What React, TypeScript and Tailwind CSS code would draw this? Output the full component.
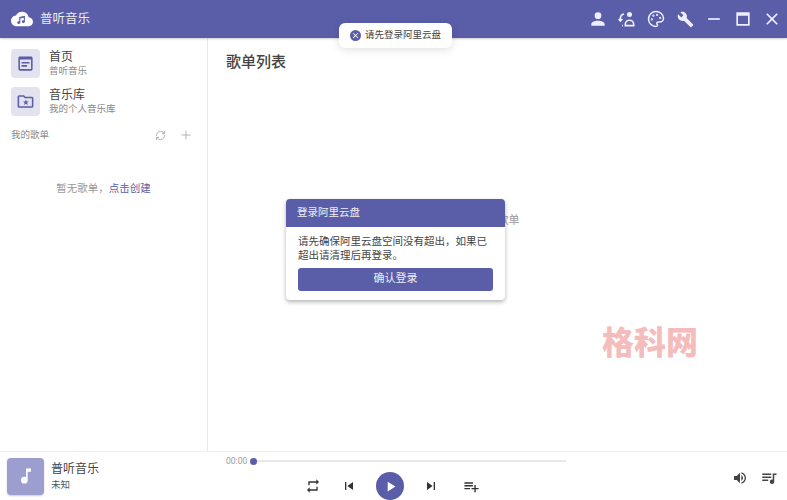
import React from "react";
import { Palette, RefreshCw, Plus } from "lucide-react";

const P = ({ d, size = 24, className = "" }: { d: string; size?: number; className?: string }) => (
  <svg width={size} height={size} viewBox="0 0 24 24" fill="currentColor" className={className}><path d={d} /></svg>
);

const mdi = {
  account: "M12,4A4,4 0 0,1 16,8A4,4 0 0,1 12,12A4,4 0 0,1 8,8A4,4 0 0,1 12,4M12,14C16.42,14 20,15.79 20,18V20H4V18C4,15.79 7.58,14 12,14Z",
  wrench: "M22.7,19L13.6,9.9C14.5,7.6 14,4.9 12.1,3C10.1,1 7.1,0.6 4.7,1.7L9,6L6,9L1.6,4.7C0.4,7.1 0.9,10.1 2.9,12.1C4.8,14 7.5,14.5 9.8,13.6L18.9,22.7C19.3,23.1 19.9,23.1 20.3,22.7L22.6,20.4C23.1,20 23.1,19.3 22.7,19Z",
  repeat: "M17,17H7V14L3,18L7,22V19H19V13H17M7,7H17V10L21,6L17,2V5H5V11H7V7Z",
  prev: "M6,18V6H8V18H6M9.5,12L18,6V18L9.5,12Z",
  next: "M16,18H18V6H16M6,18L14.5,12L6,6V18Z",
  play: "M8,5.14V19.14L19,12.14L8,5.14Z",
  add: "M2,16H10V14H2M18,14V10H16V14H12V16H16V20H18V16H22V14M14,6H2V8H14M14,10H2V12H14V10Z",
  volume: "M14,3.23V5.29C16.89,6.15 19,8.83 19,12C19,15.17 16.89,17.84 14,18.7V20.77C18,19.86 21,16.28 21,12C21,7.72 18,4.14 14,3.23M16.5,12C16.5,10.23 15.5,8.71 14,7.97V16C15.5,15.29 16.5,13.76 16.5,12M3,9V15H7L12,20V4L7,9H3Z",
  music: "M12,3V13.55C11.41,13.21 10.73,13 10,13A4,4 0 0,0 6,17A4,4 0 0,0 10,21A4,4 0 0,0 14,17V7H18V3H12Z",
  queue: "M15,6H3V8H15V6M15,10H3V12H15V10M3,16H11V14H3V16M17,6V14.18C16.69,14.07 16.35,14 16,14A3,3 0 0,0 13,17A3,3 0 0,0 16,20A3,3 0 0,0 19,17V8H22V6H17Z",
  minus: "M19,13H5V11H19V13Z",
  close: "M19,6.41L17.59,5L12,10.59L6.41,5L5,6.41L10.59,12L5,17.59L6.41,19L12,13.41L17.59,19L19,17.59L13.41,12L19,6.41Z",
  max: "M4,4H20V20H4V4M6,8V18H18V8H6Z",
  news: "M19,3H5C3.9,3 3,3.9 3,5V19C3,20.1 3.9,21 5,21H19C20.1,21 21,20.1 21,19V5C21,3.9 20.1,3 19,3M19,19H5V7H19V19M7,10H17V12H7V10M7,14H14V16H7V14Z",
  folderStar: "M20,6H12L10,4H4C2.9,4 2,4.9 2,6V18C2,19.1 2.9,20 4,20H20C21.1,20 22,19.1 22,18V8C22,6.9 21.1,6 20,6M20,18H4V6H9.17L11.17,8H20V18M12.5,9.5L13.6,12H16.2L14.1,13.7L14.9,16.4L12.5,14.8L10.1,16.4L10.9,13.7L8.8,12H11.4L12.5,9.5Z",
};

const NavItem = ({ icon, title, sub }: { icon: string; title: string; sub: string }) => (
  <div className="flex items-center h-[38px] gap-[9px]">
    <div className="w-[29px] h-[29px] rounded-[4px] bg-[#e2e3ef] flex items-center justify-center text-[#5a5ea9]">
      <P d={icon} size={19} />
    </div>
    <div className="flex flex-col">
      <span className="text-[12px] leading-[15px] text-[#444]">{title}</span>
      <span className="text-[9.5px] leading-[12px] text-[#888]">{sub}</span>
    </div>
  </div>
);

export default function App() {
  return (
    <div className="relative w-[787px] h-[500px] overflow-hidden bg-white flex flex-col" style={{ fontFamily: 'Roboto, "Noto Sans CJK SC", sans-serif' }}>
      <header className="h-[38px] shrink-0 bg-[#5a5ea9] flex items-center text-white shadow-[0_1px_2px_rgba(0,0,0,0.2)] z-10">
        <svg width="22" height="16" viewBox="0 0 24 17" className="ml-[11px]">
          <path fill="#fff" d="M19.3 6.6C18.6 2.9 15.6 0.5 12 0.5c-2.9 0-5.4 1.6-6.6 4.1C2.3 4.9 0 7.4 0 10.5c0 3.3 2.7 6 6 6h13c2.8 0 5-2.2 5-5 0-2.6-2.1-4.7-4.7-4.9z" />
          <path fill="#5a5ea9" d="M9 6.2l6.2-1.3v6.4a1.7 1.5 0 1 1-1.2-1.4V7.2l-3.8.8v4.4a1.7 1.5 0 1 1-1.2-1.4z" />
        </svg>
        <span className="ml-[7px] text-[12.5px] text-[#eceded]">普听音乐</span>
        <div className="ml-auto flex items-center gap-[9px] mr-[5px] text-[#eef]">
          <P d={mdi.account} size={20} />
          <svg width="20" height="20" viewBox="0 0 24 24" fill="none" stroke="currentColor" strokeWidth="2">
            <circle cx="15" cy="6.5" r="3" fill="currentColor" stroke="none" />
            <path d="M10 20v-1.5C10 15 13 13.5 15 13.5s5 1.500 5 5V20z" />
            <path d="M8.500 6C5 6.500 4 9 4 12v2M2 12l2 2.500L6.500 12M6 20h1" />
          </svg>
          <Palette size={18} strokeWidth={2} className="mx-px" />
          <P d={mdi.wrench} size={17} className="mx-[1.500px]" />
          <P d={mdi.minus} size={20} />
          <P d={mdi.max} size={20} />
          <P d={mdi.close} size={20} />
        </div>
      </header>

      <div className="flex flex-1 min-h-0">
        <aside className="w-[208px] shrink-0 border-r border-[#e8e8e8] px-[11px] pt-[6px] flex flex-col">
          <NavItem icon={mdi.news} title="首页" sub="普听音乐" />
          <NavItem icon={mdi.folderStar} title="音乐库" sub="我的个人音乐库" />
          <div className="flex items-center h-[20px] mt-[5px] text-[#999]">
            <span className="text-[9.5px] text-[#888]">我的歌单</span>
            <RefreshCw size={11} strokeWidth={2} className="ml-auto text-[#aaa]" />
            <Plus size={14} strokeWidth={1.5} className="ml-[13px] mr-[3px] text-[#aaa]" />
          </div>
          <div className="mt-[36px] text-center text-[10.5px] text-[#999]">
            暂无歌单，<span className="text-[#5a5ea9]">点击创建</span>
          </div>
        </aside>
        <main className="flex-1 min-w-0 pt-[13px] px-[18px]">
          <h1 className="text-[15px] leading-[22px] font-medium text-[#444]">歌单列表</h1>
          <div className="mt-[140px] text-center text-[11px] text-[#999]">暂无歌单</div>
        </main>
      </div>

      <footer className="h-[49px] shrink-0 border-t border-[#eeeeee] flex items-center relative">
        <div className="ml-[7px] w-[37px] h-[37px] rounded-[4px] bg-[#9c9ecf] flex items-center justify-center text-white shadow-[0_1px_2px_rgba(0,0,0,0.2)]">
          <P d={mdi.music} size={20} />
        </div>
        <div className="ml-[7px] flex flex-col">
          <span className="text-[12px] leading-[16px] text-[#444]">普听音乐</span>
          <span className="text-[9.5px] leading-[15px] text-[#555]">未知</span>
        </div>
        <div className="ml-[127px] self-start w-[340px] flex flex-col">
          <div className="flex items-center h-[18px] mt-0">
            <span className="text-[8.5px] text-[#999] w-[23px]">00:00</span>
            <span className="w-[7px] h-[7px] rounded-full bg-[#5a5ea9] -mr-[1px] ml-[1px] z-10" />
            <span className="flex-1 h-[2px] bg-[#e8e8e8]" />
          </div>
          <div className="flex items-center ml-[79px] mt-[2px] text-[#333]">
            <P d={mdi.repeat} size={16} />
            <P d={mdi.prev} size={16} className="ml-[20px]" />
            <div className="ml-[19px] w-[28px] h-[28px] rounded-full bg-[#5a5ea9] flex items-center justify-center text-white">
              <P d={mdi.play} size={17} />
            </div>
            <P d={mdi.next} size={16} className="ml-[19px]" />
            <P d={mdi.add} size={17} className="ml-[24px]" />
          </div>
        </div>
        <div className="ml-auto flex items-center gap-[12px] mr-[9px] text-[#444] mt-[4px]">
          <P d={mdi.volume} size={16} />
          <P d={mdi.queue} size={18} />
        </div>
      </footer>

      {/* toast */}
      <div className="absolute left-[339px] top-[23px] h-[25px] w-[113px] rounded-[6px] bg-white shadow-[0_2px_8px_rgba(0,0,0,0.12)] flex items-center pl-[11px] gap-[4px] z-20">
        <span className="w-[11px] h-[11px] rounded-full bg-[#5a5ea9] flex items-center justify-center text-white">
          <P d={mdi.close} size={9} />
        </span>
        <span className="text-[9.5px] text-[#444]">请先登录阿里云盘</span>
      </div>

      {/* dialog */}
      <div className="absolute left-[286px] top-[199px] w-[219px] h-[101px] rounded-[4px] bg-white shadow-[0_2px_4px_rgba(0,0,0,0.3)] overflow-hidden z-20">
        <div className="h-[28px] bg-[#5a5ea9] flex items-center px-[11px] text-[10.5px] text-[#eee]">登录阿里云盘</div>
        <div className="px-[12px] pt-[8px] text-[10.5px] leading-[14px] text-[#444]">
          请先确保阿里云盘空间没有超出，如果已超出请清理后再登录。
        </div>
        <div className="mx-[12px] mt-[5px] h-[23px] rounded-[3px] bg-[#5a5ea9] flex items-center justify-center text-[11px] text-[#eee]">确认登录</div>
      </div>

      {/* watermark */}
      <div className="absolute left-[602px] top-[325px] text-[32px] leading-[36px] font-black text-[#f5bcbc]">格科网</div>
    </div>
  );
}
